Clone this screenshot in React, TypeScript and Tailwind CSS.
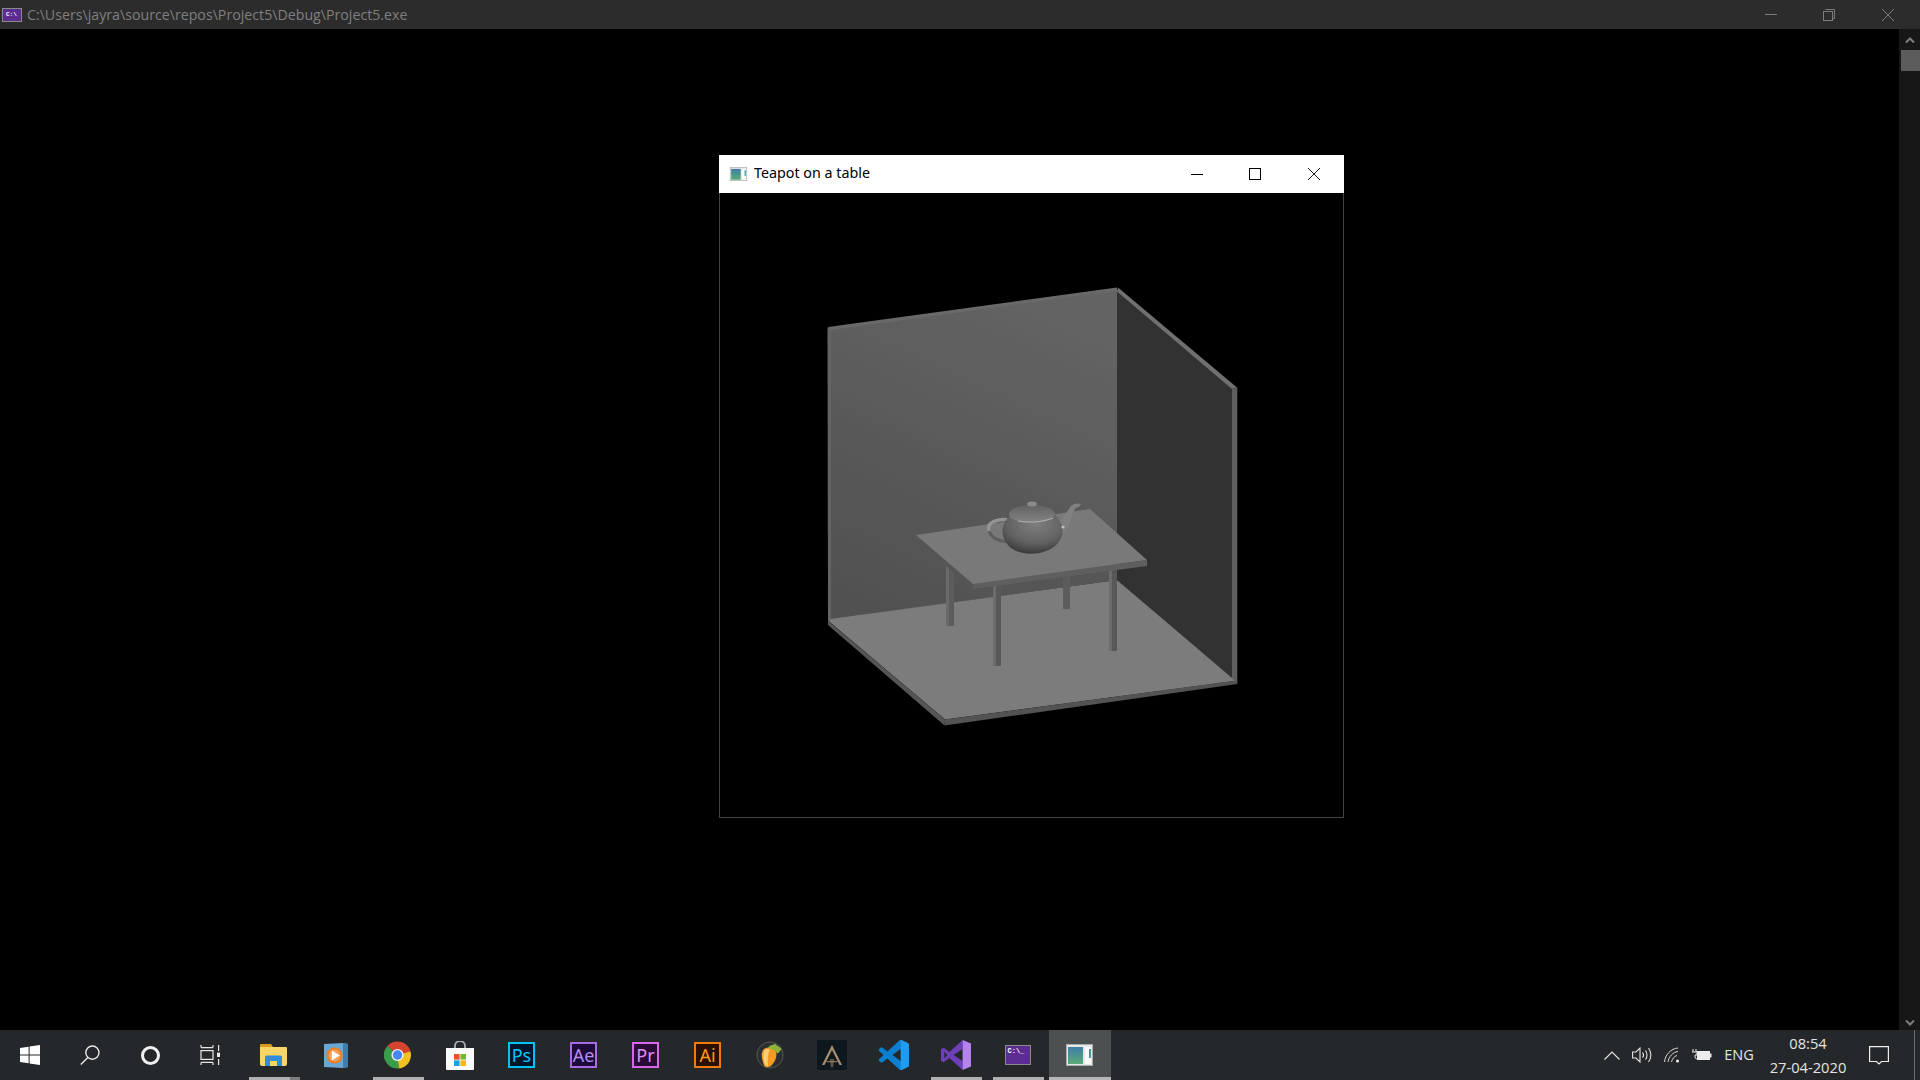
import React from 'react';

const UI_FONT = "font-['Open_Sans','Noto_Sans',sans-serif]";

const AppWindowIcon = ({ className }: { className: string }) => (
  <svg viewBox="0 0 27 22" className={className}>
    <rect x="0" y="0" width="27" height="22" fill="#e6e8e8" />
    <rect x="0.5" y="0.5" width="26" height="21" fill="none" stroke="#a9adad" />
    <rect x="2" y="3" width="15" height="17" fill="url(#appgrad)" />
    <rect x="19" y="3" width="6" height="17" fill="#fbfbfb" />
    <rect x="23" y="5" width="2" height="9" fill="#3f9b9b" />
    <defs>
      <linearGradient id="appgrad" x1="0" y1="0" x2="0" y2="1">
        <stop offset="0" stopColor="#3e7fa8" />
        <stop offset="1" stopColor="#58ab78" />
      </linearGradient>
    </defs>
  </svg>
);

const BoxIcon = ({ label, box, ink, fill }: { label: string; box: string; ink: string; fill: string }) => (
  <div className={`w-[27px] h-[26px] border-2 flex items-center justify-center text-[18px] leading-none font-['Noto_Sans',sans-serif] ${box} ${ink} ${fill}`}>
    {label}
  </div>
);

const WindowsLogo = () => (
  <svg viewBox="0 0 20 20" className="w-5 h-5" fill="#fff">
    <path d="M0 3 8.6 1.7V9.5H0ZM9.6 1.5 20 0V9.5H9.6ZM0 10.5H8.6V18.3L0 17ZM9.6 10.5H20V20L9.6 18.5Z" />
  </svg>
);

const SearchIcon = () => (
  <svg viewBox="0 0 20 20" className="w-5 h-5" fill="none" stroke="#e8e8e8" strokeWidth="1.4">
    <circle cx="12.4" cy="7.6" r="6.6" />
    <path d="M7.8 12.4 .8 19.5" />
  </svg>
);

const TaskViewIcon = () => (
  <svg viewBox="0 0 20 20" className="w-5 h-5" fill="none" stroke="#e8e8e8" strokeWidth="1.2">
    <path d="M1 2.6H13M1 0V2.6M13 0V2.6" />
    <rect x="1" y="5.6" width="12" height="8.8" />
    <path d="M1 17.4H13M1 17.4V20M13 17.4V20" />
    <path d="M18.6 0V6M18.6 14V20" />
    <rect x="17" y="7.6" width="3" height="4.4" fill="#e8e8e8" stroke="none" />
  </svg>
);

const FolderIcon = () => (
  <svg viewBox="0 0 27 22" className="w-[27px] h-[22px]">
    <path d="M0 1a1 1 0 0 1 1-1h10l2 3H0Z" fill="#d99a1c" />
    <path d="M0 3h26a1 1 0 0 1 1 1v16a2 2 0 0 1-2 2H2a2 2 0 0 1-2-2Z" fill="#f8d568" />
    <path d="M5 22V13a1.5 1.5 0 0 1 1.5-1.5h14A1.5 1.5 0 0 1 22 13v9h-5v-5H10v5Z" fill="#2f8fd3" />
  </svg>
);

const MediaIcon = () => (
  <svg viewBox="0 0 24 25" className="w-6 h-[25px]">
    <path d="M0 1 19 0 24 1V24L19 25 0 24Z" fill="#6aa8d2" />
    <path d="M19 0 24 1V24L19 25Z" fill="#3f7fae" />
    <circle cx="10.5" cy="12.5" r="8" fill="#ef7d22" />
    <circle cx="10.5" cy="12.5" r="6" fill="#f6a05a" />
    <path d="M7.8 7.5 15.8 12.5 7.8 17.5Z" fill="#fff" />
  </svg>
);

const ChromeIcon = () => (
  <svg viewBox="0 0 24 24" className="w-[27px] h-[28px]">
    <path d="M12 12 3 4.06A12 12 0 0 1 23.5 8.6Z" fill="#d8432f" />
    <path d="M12 12 23.5 8.6A12 12 0 0 1 13 24Z" fill="#f2c01f" />
    <path d="M12 12 13 24A12 12 0 0 1 3 4.06Z" fill="#3a9d4b" />
    <circle cx="12" cy="12" r="5.4" fill="#f3f3f3" />
    <circle cx="12" cy="12" r="4.2" fill="#4688ee" />
  </svg>
);

const StoreIcon = () => (
  <svg viewBox="0 0 28 29" className="w-7 h-[29px]">
    <path d="M9 8V5a5 5 0 0 1 10 0v3" fill="none" stroke="#aab0b3" strokeWidth="1.8" />
    <path d="M0 7H28V28a1 1 0 0 1-1 1H1a1 1 0 0 1-1-1Z" fill="#fbfbfb" />
    <rect x="8" y="13" width="5.6" height="5.6" fill="#e8512d" />
    <rect x="14.4" y="13" width="5.6" height="5.6" fill="#76b82a" />
    <rect x="8" y="19.4" width="5.6" height="5.6" fill="#1ba1e2" />
    <rect x="14.4" y="19.4" width="5.6" height="5.6" fill="#fdb813" />
  </svg>
);

const FruityIcon = () => (
  <svg viewBox="0 0 28 28" className="w-7 h-7">
    <circle cx="14" cy="14" r="14" fill="#2c2f30" />
    <circle cx="14" cy="14" r="13" fill="none" stroke="#5a5d5e" strokeWidth="0.8" />
    <path d="M7 9C9 5.500 16 5.500 19 9 22 13 20 20 15.500 24.500 12.500 27 8.500 27 7.500 23 6 18 4.500 13 7 9Z" fill="#f59a23" />
    <path d="M8.500 9.500C10 7.500 12.500 7.500 13.500 9 11.500 14 11.500 20 12 25 10 25.500 8.800 24 8.300 21.500 7.500 18 6.800 12.500 8.500 9.500Z" fill="#fbd07a" />
    <path d="M12 7C14 3 18 4.500 19 2.500 20.500 5.500 25 5 25.500 9 23.500 9 24 11.500 21.500 12.500 19.500 10 16 7.500 12 7Z" fill="#8fb339" />
  </svg>
);

const AssassinIcon = () => (
  <svg viewBox="0 0 30 30" className="w-[30px] h-[30px]">
    <rect width="30" height="30" fill="#0d171e" />
    <path d="M15 5 25 25H22.500L15 10 7.500 25H5Z" fill="#a88e6b" />
    <path d="M12.800 19H17.200L16.300 26 15 28.500 13.700 26Z" fill="#5f5040" />
    <path d="M9.500 21H20.500L20 22.200H10Z" fill="#8e7a60" />
  </svg>
);

const CodeIcon = () => (
  <svg viewBox="0 0 100 100" className="w-[30px] h-[30px]">
    <path
      fillRule="evenodd"
      fill="#0c7fd0"
      d="M96 10.800 75 .7a6 6 0 0 0-7.100 1.200L28 38 10.900 25a4 4 0 0 0-5 .2L.4 30.500a4 4 0 0 0 0 5.900L15.300 50 .4 63.600a4 4 0 0 0 0 5.900l5.500 5a4 4 0 0 0 5 .2L28 62l39.900 36.400a6 6 0 0 0 7.100 1.200l21-10.100a6.200 6.200 0 0 0 4-5.500V16a6.200 6.200 0 0 0-4-5.200ZM75 72.700 44.800 50 75 27.200Z"
    />
    <path fill="#1f9cf0" d="M75 0H72V100H75C90 93 100 90 100 84V16C100 10 90 7 75 0Z" />
  </svg>
);

const StudioIcon = () => (
  <svg viewBox="0 0 100 100" className="w-[30px] h-[30px]">
    <path
      fillRule="evenodd"
      fill="#6d3fb8"
      d="M72 0 28 40 9 26 0 31V69L9 74 28 60 72 100V70L42 50 72 30ZM11 39 21 50 11 61Z"
    />
    <path fill="#b583ee" d="M72 0 100 12V88L72 100Z" />
  </svg>
);

const ConsoleIcon = ({ className, text }: { className: string; text: string }) => (
  <div className={`bg-[#5c2d91] border border-[#8a8a8a] font-['Liberation_Mono',monospace] font-bold text-white leading-none overflow-hidden ${className}`}>
    {text}
  </div>
);

// the OpenGL scene, in page coordinates so the numbers read straight off the screenshot
const TeapotScene = () => (
  <svg viewBox="720 193 623 624" className="w-[623px] h-[624px] block">
    <defs>
      <linearGradient id="wall" x1="0.7" y1="0" x2="0.3" y2="1">
        <stop offset="0" stopColor="#646464" />
        <stop offset="1" stopColor="#515151" />
      </linearGradient>
      <radialGradient id="pot" cx="0.55" cy="0.25" r="0.8">
        <stop offset="0" stopColor="#7e7e7e" />
        <stop offset="0.6" stopColor="#626262" />
        <stop offset="1" stopColor="#343434" />
      </radialGradient>
      <linearGradient id="lid" x1="0" y1="0" x2="0" y2="1">
        <stop offset="0" stopColor="#626262" />
        <stop offset="1" stopColor="#848484" />
      </linearGradient>
      <filter id="soft" x="-5%" y="-5%" width="110%" height="110%">
        <feGaussianBlur stdDeviation="0.45" />
      </filter>
    </defs>
    <g filter="url(#soft)">
      {/* back wall and its lit edges */}
      <path d="M829 328 1117 288V580L829 620Z" fill="url(#wall)" />
      <path d="M828 327 1117 287.500V290.500L831 330Z" fill="#696969" />
      <path d="M827.500 327 831 330V619L828 622Z" fill="#636363" />
      {/* right wall */}
      <path d="M1117 290 1232 388V680L1117 580Z" fill="#333333" />
      <path d="M1118 287.500 1237 387.500 1232 389 1117 291.500Z" fill="#707070" />
      <path d="M1232 389 1237.300 387.500V684L1232 681Z" fill="#5f5f5f" />
      {/* floor */}
      <path d="M830 619 1117 580 1232 678 1235 681 945 719.500 829 621.500Z" fill="#7b7b7b" />
      <path d="M828 621 945 719.500 944.500 725.500 828 625Z" fill="#555555" />
      <path d="M945 719.500 1236 680.500 1237.300 684 944.500 725.500Z" fill="#525252" />
      {/* far legs */}
      <rect x="946" y="562" width="8" height="64" rx="1" fill="#5c5c5c" />
      <rect x="946" y="562" width="3" height="64" fill="#6a6a6a" />
      <rect x="1063" y="572" width="7" height="37" rx="1" fill="#5c5c5c" />
      {/* near legs */}
      <rect x="993" y="584" width="8" height="82" rx="1" fill="#595959" />
      <rect x="993" y="584" width="3" height="82" fill="#6c6c6c" />
      <rect x="1109" y="566" width="8" height="85" rx="1" fill="#595959" />
      <rect x="1109" y="566" width="3" height="85" fill="#6c6c6c" />
      {/* table top */}
      <path d="M915 535 973 584V589L916 540Z" fill="#555555" />
      <path d="M973 584 1147 560V566L973 589Z" fill="#5f5f5f" />
      <path d="M916 535 1090 509 1147 560 973 584Z" fill="#797979" />
      {/* teapot */}
      <path d="M1007 542C1000 541 991 538 989 531" fill="none" stroke="#5e5e5e" strokeWidth="3" />
      <path d="M1011 520C998 518 986 522 989 531" fill="none" stroke="#939393" strokeWidth="3.500" />
      <path d="M1054 524C1063 522 1066 512 1071 506 1074 503 1078 503 1081 504L1079 507C1075 507 1073 512 1071 520 1068 530 1062 536 1054 541Z" fill="#808080" />
      <path d="M1010 516C1002 522 1000 534 1006 542 1014 558 1050 558 1060 540 1066 530 1062 522 1054 514Z" fill="url(#pot)" />
      <circle cx="1063" cy="527" r="1.600" fill="#bdbdbd" />
      <ellipse cx="1032" cy="514" rx="23" ry="9" fill="url(#lid)" />
      <path d="M1018 521C1028 523 1044 522 1053 518" fill="none" stroke="#adadad" strokeWidth="1.200" />
      <ellipse cx="1032" cy="504" rx="5" ry="2.500" fill="#8a8a8a" />
    </g>
  </svg>
);

const App = () => {
  const apps = [
    { key: 'folder', icon: <FolderIcon />, bar: 'explorer' },
    { key: 'media', icon: <MediaIcon /> },
    { key: 'chrome', icon: <ChromeIcon />, bar: 'open' },
    { key: 'store', icon: <StoreIcon /> },
    { key: 'ps', icon: <BoxIcon label="Ps" box="border-[#00c4f5]" ink="text-[#00c4f5]" fill="bg-[#00152b]" /> },
    { key: 'ae', icon: <BoxIcon label="Ae" box="border-[#a86be0]" ink="text-[#b78cf0]" fill="bg-[#1c0a3a]" /> },
    { key: 'pr', icon: <BoxIcon label="Pr" box="border-[#d966e8]" ink="text-[#e38cf0]" fill="bg-[#2a0a36]" /> },
    { key: 'ai', icon: <BoxIcon label="Ai" box="border-[#f07a10]" ink="text-[#ff9a1f]" fill="bg-[#2a1000]" /> },
    { key: 'fl', icon: <FruityIcon /> },
    { key: 'ac', icon: <AssassinIcon /> },
    { key: 'code', icon: <CodeIcon /> },
    { key: 'vs', icon: <StudioIcon />, bar: 'open' },
    { key: 'cmd', icon: <ConsoleIcon className="w-[26px] h-[20px] text-[7px] pl-[2px] pt-[2px]" text="C:\_" />, bar: 'open' },
    { key: 'gl', icon: <AppWindowIcon className="w-[27px] h-[22px]" />, bar: 'active' },
  ];

  return (
    <div className={`h-screen w-full flex flex-col bg-black overflow-hidden ${UI_FONT}`}>
      {/* console title bar */}
      <div className="h-[29px] shrink-0 bg-[#2c2c2c] flex items-center">
        <ConsoleIcon className="ml-[2px] w-5 h-[14px] text-[6px] pl-[3px] pt-[3px]" text="C:\" />
        <div className="ml-[5px] text-[14.2px] text-[#7f7f7f] whitespace-nowrap">C:\Users\jayra\source\repos\Project5\Debug\Project5.exe</div>
        <div className="ml-auto flex pr-[3px]">
          <div className="w-[59px] h-[29px] flex items-center justify-center">
            <div className="w-3 h-px bg-[#7c7c7c] ml-[2px]" />
          </div>
          <div className="w-[59px] h-[29px] flex items-center justify-center">
            <svg viewBox="0 0 12 12" className="w-3 h-3" fill="none" stroke="#7c7c7c">
              <rect x="0.5" y="2.500" width="9" height="9" />
              <path d="M2.500 .5H11.500V9.500H9.500" />
            </svg>
          </div>
          <div className="w-[59px] h-[29px] flex items-center justify-center">
            <svg viewBox="0 0 12 12" className="w-3 h-3" fill="none" stroke="#7c7c7c">
              <path d="M0 0 12 12M12 0 0 12" />
            </svg>
          </div>
        </div>
      </div>

      <div className="flex-1 min-h-0 flex relative">
        <div className="flex-1 bg-black" />
        {/* scrollbar */}
        <div className="w-[21px] shrink-0 bg-[#171717] flex flex-col items-center">
          <svg viewBox="0 0 10 8" className="w-[10px] h-2 mt-[7px]" fill="none" stroke="#7d7d7d" strokeWidth="2">
            <path d="M1 6.500 5 2.500 9 6.500" />
          </svg>
          <div className="w-[19px] h-[21px] mt-[6px] ml-[1px] bg-[#5c5c5c]" />
          <svg viewBox="0 0 10 8" className="w-[10px] h-2 mt-auto mb-[3px]" fill="none" stroke="#7d7d7d" strokeWidth="2">
            <path d="M1 1.500 5 5.500 9 1.500" />
          </svg>
        </div>

        {/* GLUT window floating over the console */}
        <div className="absolute left-[719px] top-[126px] w-[625px]">
          <div className="h-[38px] bg-white flex items-center">
            <AppWindowIcon className="ml-[10px] w-[19px] h-[14px]" />
            <div className="ml-[6px] mb-[2px] text-[14.3px] text-black font-['Noto_Sans',sans-serif]">Teapot on a table</div>
            <div className="ml-auto flex pr-[1px]">
              <div className="w-[58px] h-[38px] flex items-center justify-center">
                <div className="w-3 h-px bg-black" />
              </div>
              <div className="w-[58px] h-[38px] mr-[1px] flex items-center justify-center">
                <div className="w-3 h-3 border border-black" />
              </div>
              <div className="w-[58px] h-[38px] flex items-center justify-center">
                <svg viewBox="0 0 12 12" className="w-3 h-3" fill="none" stroke="#000" strokeWidth="0.9">
                  <path d="M0 0 12 12M12 0 0 12" />
                </svg>
              </div>
            </div>
          </div>
          <div className="border border-t-0 border-[#444444] bg-black">
            <TeapotScene />
          </div>
        </div>
      </div>

      {/* taskbar */}
      <div className="h-[50px] shrink-0 bg-[#24282a] flex text-[#e4e4e4]">
        <div className="w-[60px] flex items-center justify-center"><WindowsLogo /></div>
        <div className="w-[60px] flex items-center justify-center"><SearchIcon /></div>
        <div className="w-[60px] flex items-center justify-center">
          <div className="w-[19px] h-[19px] rounded-full border-[3px] border-[#f0f0f0]" />
        </div>
        <div className="w-[60px] flex items-center justify-center"><TaskViewIcon /></div>
        <div className="ml-[3px] flex">
          {apps.map((app) => (
            <div
              key={app.key}
              className={`relative w-[62px] h-[50px] pr-[1px] flex items-center justify-center ${app.bar === 'active' ? 'bg-[#4c5051]' : ''}`}
            >
              {app.icon}
              {app.bar === 'open' && <div className="absolute bottom-0 left-[6px] right-[5px] h-[3px] bg-[#aeb0b1]" />}
              {app.bar === 'active' && <div className="absolute bottom-0 left-0 right-0 h-[3px] bg-[#b5b7b8]" />}
              {app.bar === 'explorer' && (
                <div className="absolute bottom-0 left-[6px] right-[5px] h-[3px] bg-[#aeb0b1] flex justify-end">
                  <div className="w-[10px] h-[3px] bg-[#7b7d7e]" />
                </div>
              )}
            </div>
          ))}
        </div>

        <div className="ml-auto flex items-center">
          <div className="w-[30px] flex justify-center">
            <svg viewBox="0 0 16 9" className="w-4 h-[9px]" fill="none" stroke="#e4e4e4" strokeWidth="1.200">
              <path d="M.5 8.500 8 1l7.500 7.500" />
            </svg>
          </div>
          <div className="w-[30px] flex justify-center">
            <svg viewBox="0 0 20 16" className="w-5 h-4" fill="none" stroke="#e4e4e4" strokeWidth="1.100">
              <path d="M.6 5H4L8 1V15L4 11H.6Z" />
              <path d="M10.500 5.500C11.800 7 11.800 9 10.500 10.500M13.500 3.500C15.500 6 15.500 10 13.500 12.500M16.500 1C19.600 5 19.600 11 16.500 15" />
            </svg>
          </div>
          <div className="w-[30px] flex justify-center">
            <svg viewBox="0 0 16 16" className="w-4 h-4" fill="none" stroke="#d8d8d8" strokeWidth="1">
              <path d="M.5 15C1 8 7 1.500 14 1" />
              <path d="M4 15C4.500 10 9 5 14 4.500" />
              <path d="M7.500 15C8 12 10.500 9 13 8.500" />
              <circle cx="13.500" cy="14" r="1.500" fill="#f0f0f0" stroke="none" />
            </svg>
          </div>
          <div className="w-[30px] flex justify-center">
            <svg viewBox="0 0 20 12" className="w-5 h-3">
              <path d="M1 0V3M4 0V3M0 3H5V6H3V8C3 10 5 10 7 10" fill="none" stroke="#ececec" strokeWidth="1" />
              <rect x="5" y="2" width="13" height="9" fill="#ececec" />
              <rect x="18" y="4.500" width="1.500" height="4" fill="#ececec" />
            </svg>
          </div>
          <div className="w-[44px] text-center text-[14.5px]">ENG</div>
          <div className="w-[94px] text-center text-[14.7px] leading-[24px]">
            <div>08:54</div>
            <div>27-04-2020</div>
          </div>
          <div className="w-[48px] flex justify-center">
            <svg viewBox="0 0 20 19" className="w-5 h-[19px]" fill="none" stroke="#eeeeee" strokeWidth="1.200">
              <path d="M.6 .6H19.400V15.500H12.500L10 18 7.500 15.500H.6Z" />
            </svg>
          </div>
          <div className="w-[17px] h-[50px] flex justify-center pl-[5px]">
            <div className="w-px h-full bg-[#6b6f70]" />
          </div>
        </div>
      </div>
    </div>
  );
};

export default App;
